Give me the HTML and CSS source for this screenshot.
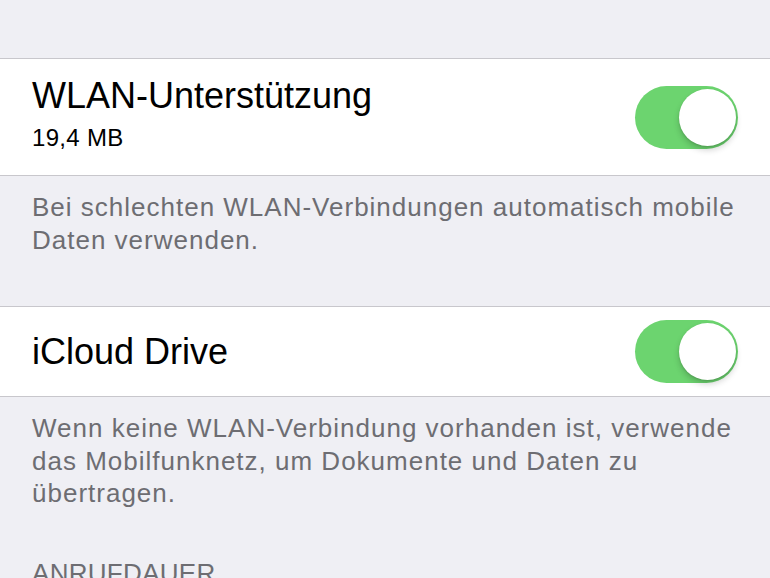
FILE: index.html
```html
<!DOCTYPE html>
<html lang="de">
<head>
<meta charset="utf-8">
<title>Mobiles Netz</title>
<link rel="stylesheet" href="styles.css">
</head>
<body>
  <div class="settings">
    <section class="group">
      <div class="cell cell-tall">
        <div class="cell-text">
          <div class="cell-title">WLAN-Unterstützung</div>
          <div class="cell-detail">19,4 MB</div>
        </div>
        <div class="switch is-on" role="switch" aria-checked="true"><span class="knob"></span></div>
      </div>
    </section>
    <p class="footer">Bei schlechten WLAN-Verbindungen automatisch mobile Daten verwenden.</p>

    <section class="group">
      <div class="cell cell-short">
        <div class="cell-text">
          <div class="cell-title">iCloud Drive</div>
        </div>
        <div class="switch is-on" role="switch" aria-checked="true"><span class="knob"></span></div>
      </div>
    </section>
    <p class="footer">Wenn keine WLAN-Verbindung vorhanden ist, verwende das Mobilfunknetz, um Dokumente und Daten zu übertragen.</p>

    <h2 class="section-header">ANRUFDAUER</h2>
  </div>
</body>
</html>
```

FILE: styles.css
```css
html, body {
  margin: 0;
  padding: 0;
}

body {
  background: #efeff4;
  font-family: "Liberation Sans", Arial, sans-serif;
  color: #000;
  overflow: hidden;
}

.settings {
  padding-top: 58px;
}

.group {
  background: #fff;
  border-top: 1px solid #c8c7cc;
  border-bottom: 1px solid #c8c7cc;
}

.footer + .group {
  margin-top: 5px;
}

.cell {
  display: flex;
  align-items: center;
  justify-content: space-between;
  padding: 0 32px;
}

.cell-tall {
  height: 116px;
}

.cell-tall .cell-text {
  margin-top: -7px;
}

.cell-short {
  height: 89px;
}

.cell-title {
  font-size: 36px;
  line-height: 43px;
}

.cell-detail {
  font-size: 24px;
  line-height: 30px;
  margin-top: 6px;
  letter-spacing: 0.3px;
}

.switch {
  position: relative;
  width: 103px;
  height: 63px;
  border-radius: 32px;
  background: #6cd46f;
  flex: none;
}

.switch .knob {
  position: absolute;
  top: 3px;
  right: 2px;
  width: 57px;
  height: 57px;
  border-radius: 50%;
  background: #fff;
  box-shadow: 0 4px 6px rgba(0, 0, 0, 0.18), 0 1px 2px rgba(0, 0, 0, 0.12);
}

.footer {
  margin: 0;
  padding: 15px 32px 45px;
  font-size: 26px;
  line-height: 32.5px;
  letter-spacing: 1px;
  color: #6d6d72;
}

.section-header {
  margin: 0;
  padding: 2px 32px 0;
  font-size: 26px;
  line-height: 32.5px;
  letter-spacing: 0.3px;
  font-weight: normal;
  color: #6d6d72;
}
```
